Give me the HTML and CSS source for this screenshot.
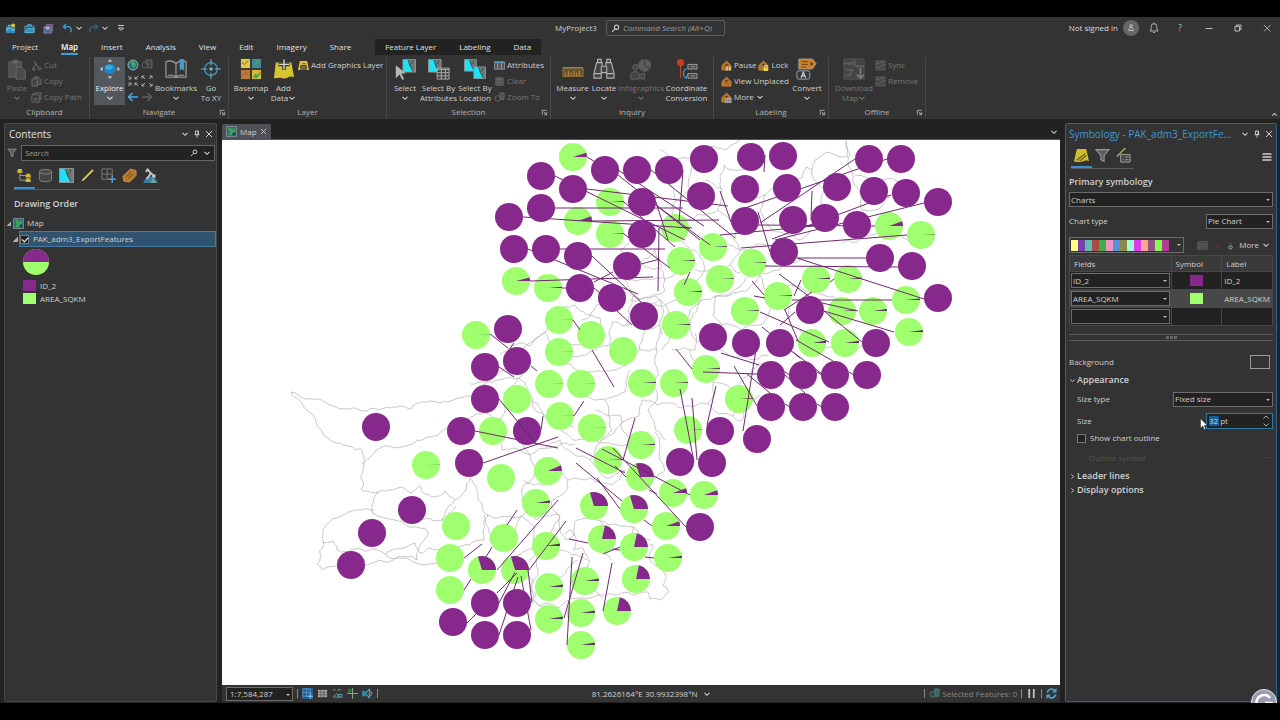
FILE: index.html
```html
<!DOCTYPE html>
<html lang="en">
<head>
<meta charset="utf-8">
<title>MyProject3</title>
<link rel="stylesheet" href="styles.css">
</head>
<body>
<svg class="sprite" aria-hidden="true">
  <symbol id="chev" viewBox="0 0 8 8"><path d="M1.5 2.8 4 5.3 6.5 2.8" fill="none" stroke="currentColor" stroke-width="1.1"/></symbol>
  <symbol id="close" viewBox="0 0 8 8"><path d="M1 1 7 7M7 1 1 7" fill="none" stroke="currentColor"/></symbol>
  <symbol id="pin" viewBox="0 0 8 8"><path d="M2.5 1h3v3.5h-3zM1.5 4.7h5M4 5v2.5M5 1v3.500" fill="none" stroke="currentColor" stroke-width=".9"/></symbol>
  <symbol id="launch" viewBox="0 0 8 8"><path d="M1.500 6.500v-5h5M3.300 3.300 6 6M6.500 3.500v3h-3" fill="none" stroke="currentColor"/></symbol>
  <symbol id="lens" viewBox="0 0 10 10"><path d="M6.200 1.200a2.400 2.400 0 1 1 0 4.800 2.400 2.400 0 0 1 0-4.800M4.400 5.400 1.200 8.800" fill="none" stroke="currentColor" stroke-width="1.200"/></symbol>
  <symbol id="funnel" viewBox="0 0 14 14"><path d="M1 1.500h12L8.500 7v5.500l-3-1.500V7z" fill="#5c5c5c" stroke="#999"/></symbol>
  <symbol id="mapicon" viewBox="0 0 12 12"><path d="M.5.500h11v11H.5z" fill="#1f6f86" stroke="#9a9a9a" stroke-width=".8"/><path d="M2 2h3l2 2 3-2v4L8 7l-1 3H2l2-3z" fill="#47a04b"/><path d="M7 8l3-1v3H7z" fill="#173f63"/></symbol>
  <symbol id="seltile" viewBox="0 0 14 14"><path d="M.5.500h13v13H.5z" fill="#6f7777" stroke="#8d9494"/><path d="M1 1h5l1.500 6L11 13H1z" fill="#1fe3f5"/><path d="m6 1 1.500 5 3-2V1M7.500 6 11 13" fill="none" stroke="#2b4b50" stroke-width=".8"/></symbol>
  <symbol id="house" viewBox="0 0 12 12"><path d="M1 6 6 1.200 11 6v5H1z" fill="#b07327" stroke="#cf8d38" stroke-width=".8"/><path d="M4.500 5.200h3M6 4v3" stroke="#57380f"/></symbol>
  <symbol id="tilegrey" viewBox="0 0 12 12"><path d="M1 1h10v10H1z" fill="#484848" stroke="#5c5c5c"/><path d="M1 4h4l2-2h3M2 8h4l2-3h3" fill="none" stroke="#666"/></symbol>
</svg>

<main class="app">
  <header class="titlebar">
    <div class="quick">
      <button aria-label="New project"><svg viewBox="0 0 12 12"><path d="M1 4h10v7H1z" fill="#2b8fc0"/><path d="M3.500 4V2.500h4V4M1 8l4-3 3 3 3-1" fill="none" stroke="#9bd5ee"/><circle cx="9" cy="2.500" r="2" fill="#d7c32d"/></svg></button>
      <button aria-label="Open project"><svg viewBox="0 0 12 12"><path d="M1 3.500h10v7H1z" fill="#2e5f78" stroke="#4ea9d3"/><path d="M4 3.500V1.500h4v2M1 10.500 3.500 6h8l-1 4.500z" fill="#3b8fb8" stroke="#6bbbdc" stroke-width=".7"/></svg></button>
      <button aria-label="Save project"><svg viewBox="0 0 12 12"><path d="M3 1h8v8H9V3H3z" fill="#76638d"/><path d="M1 4h8v7H1z" fill="#456d8e" stroke="#8a7aa3"/><path d="M3 4h4v3H3z" fill="#b9b2c5"/></svg></button>
      <button class="tight" aria-label="Undo"><svg viewBox="0 0 12 12"><path d="M4.500 1 1.500 4l3 3M1.700 4H7a3.500 3.500 0 0 1 2 6" fill="none" stroke="#3fa0d8" stroke-width="1.400"/></svg></button>
      <svg class="c"><use href="#chev"/></svg>
      <button class="tight" aria-label="Redo"><svg viewBox="0 0 12 12"><path d="m7.500 1 3 3-3 3M10.300 4H5a3.500 3.500 0 0 0-2 6" fill="none" stroke="#3a6478" stroke-width="1.400"/></svg></button>
      <svg class="c"><use href="#chev"/></svg>
      <svg class="c last" viewBox="0 0 8 8"><path d="M1 1.500h6M1.500 4 4 6.500 6.500 4z" fill="none" stroke="currentColor"/></svg>
    </div>
    <div class="project">
      <span>MyProject3</span>
      <label class="command"><svg><use href="#lens"/></svg><input aria-label="Command search" placeholder="Command Search (Alt+Q)"></label>
    </div>
    <div class="account">
      <span>Not signed in</span>
      <svg class="avatar" viewBox="0 0 16 16"><circle cx="8" cy="8" r="8" fill="#666"/><circle cx="8" cy="6" r="1.300" fill="none" stroke="#ccc" stroke-width=".9"/><path d="M5.800 10.500c0-4 4.400-4 4.400 0z" fill="none" stroke="#ccc" stroke-width=".9"/></svg>
      <button aria-label="Notifications"><svg viewBox="0 0 12 12"><path d="M2 9h8L8.800 7V4.500a2.800 2.800 0 0 0-5.600 0V7zM5 10.500h2M6 .5v1" fill="none" stroke="currentColor" stroke-width=".9"/></svg></button>
      <button>?</button>
      <button aria-label="Minimize"><svg viewBox="0 0 12 12"><path d="M2.500 6.500h7" stroke="currentColor"/></svg></button>
      <button aria-label="Restore"><svg viewBox="0 0 12 12"><path d="M3 4.500h4.500V9H3zM4.500 4.500V3H9v4.500H7.500" fill="none" stroke="currentColor"/></svg></button>
      <button aria-label="Close"><svg viewBox="0 0 12 12"><path d="m3 3 6.500 6.500M9.500 3 3 9.500" stroke="currentColor" stroke-width=".9"/></svg></button>
    </div>
  </header>

  <nav class="tabs">
    <button>Project</button><button class="on">Map</button><button>Insert</button><button>Analysis</button><button>View</button><button>Edit</button><button>Imagery</button><button>Share</button>
    <div class="context"><button>Feature Layer</button><button>Labeling</button><button>Data</button></div>
  </nav>

  <section class="ribbon">
    <div class="group clipboard">
      <div class="tools">
        <button class="big off"><svg viewBox="0 0 24 24"><path d="M3 4h14v17H3z" fill="#505050" stroke="#606060"/><path d="M7 2h6v4H7z" fill="#666"/><path d="M11 10h6l4 4v9H11z" fill="#4a4a4a" stroke="#6c6c6c"/></svg>Paste<svg class="c"><use href="#chev"/></svg></button>
        <div class="stack">
          <button class="small off"><svg viewBox="0 0 12 12"><path d="m3 1 5 7M6 4 2 9" stroke="#777"/><circle cx="9" cy="9.500" r="1.500" fill="none" stroke="#777"/><circle cx="3" cy="10" r="1.300" fill="none" stroke="#777"/></svg>Cut</button>
          <button class="small off"><svg viewBox="0 0 12 12"><path d="M1 3h6v8H1zM4 3V1h4l3 3v5H7" fill="#444" stroke="#707070"/></svg>Copy</button>
          <button class="small off"><svg viewBox="0 0 12 12"><path d="M3 3V1h8v7H9M1 3h8v8H1zM3 7l1 2 1-3 1 3 1-3" fill="none" stroke="#707070"/></svg>Copy Path</button>
        </div>
      </div><footer>Clipboard</footer>
    </div>
    <div class="group navigate">
      <div class="tools">
        <button class="big on"><svg viewBox="0 0 24 24"><ellipse cx="12" cy="12" rx="6.500" ry="5.500" fill="#1c86c7"/><ellipse cx="11" cy="10" rx="4" ry="2.500" fill="#45a9e0"/><path d="m12 1 2.500 3h-5zM12 23l2.500-3h-5zM1 12l3-2.500v5zM23 12l-3-2.500v5z" fill="#c6c6c6"/></svg>Explore<svg class="c"><use href="#chev"/></svg></button>
        <div class="pad">
          <button aria-label="Full extent"><svg viewBox="0 0 12 12"><circle cx="6" cy="6" r="5" fill="#246f82" stroke="#9bb6bd" stroke-width=".9"/><path d="m3 3 4-1 2 4-3 4-1-4z" fill="#4aa35a"/></svg></button>
          <button aria-label="Zoom to selection"><svg viewBox="0 0 12 12"><path d="M5 1h6v8H7z" fill="#444" stroke="#626262"/><circle cx="4" cy="6" r="3" fill="none" stroke="#626262"/></svg></button>
          <button aria-label="Fixed zoom in"><svg viewBox="0 0 12 12"><path d="m1 1 3 3M4 1.500V4H1.500M11 1 8 4M8 1.500V4h2.500M1 11l3-3M1.500 8H4v2.500M11 11 8 8M8 10.500V8h2.500" fill="none" stroke="#b5b5b5" stroke-width=".9"/></svg></button>
          <button aria-label="Fixed zoom out"><svg viewBox="0 0 12 12"><path d="m1 1 3 3M1 3.500V1h2.500M11 1 8 4M8.500 1H11v2.500M1 11l3-3M1 8.500V11h2.500M11 11 8 8M8.500 11H11V8.500" fill="none" stroke="#b5b5b5" stroke-width=".9"/></svg></button>
          <button aria-label="Previous extent"><svg viewBox="0 0 12 12"><path d="M5.500 2 1.500 6l4 4M1.500 6H11" fill="none" stroke="#49ade2" stroke-width="1.500"/></svg></button>
          <button aria-label="Next extent"><svg viewBox="0 0 12 12"><path d="m6.500 2 4 4-4 4M10.500 6H1" fill="none" stroke="#606060" stroke-width="1.500"/></svg></button>
        </div>
        <button class="big"><svg viewBox="0 0 24 24"><path d="M1 4c5-2 8-1 11 2 3-3 6-4 11-2v17H1zM12 6v15M3 19c4-1 7-1 9 2 2-3 5-3 9-2" fill="none" stroke="#a5a5a5" stroke-width="1.200"/><path d="M16 1h5v13l-2.500-2-2.500 2z" fill="#3f9bd2"/></svg>Bookmarks<svg class="c"><use href="#chev"/></svg></button>
        <button class="big"><svg viewBox="0 0 24 24"><circle cx="12" cy="12" r="7" fill="none" stroke="#4096c2" stroke-width="1.500"/><circle cx="12" cy="12" r="2" fill="#69b7d9"/><path d="M12 1v7M12 16v7M1 12h7M16 12h7" stroke="#7ea9bc" stroke-width="1.200"/></svg>Go<br>To XY</button>
      </div><footer>Navigate<svg><use href="#launch"/></svg></footer>
    </div>
    <div class="group layer">
      <div class="tools">
        <button class="big"><svg viewBox="0 0 24 24"><path d="M1 1h10v10H1z" fill="#e4c64c"/><path d="M13 1h10v10H13z" fill="#3d88a8"/><path d="M1 13h10v10H1z" fill="#be793a"/><path d="M13 13h10v10H13z" fill="#d6b93b"/><path d="m14 9 5-7h3l-3 5zM14 21l3-4 2 2 3-5v4l-4 4z" fill="#4ba153"/><path d="m2 5 3 2 4-4M2 20l4-4 3 3" fill="none" stroke="#7c6336"/></svg>Basemap<svg class="c"><use href="#chev"/></svg></button>
        <button class="big"><svg viewBox="0 0 24 24"><path d="M3 5h17l3 16c-5-3-8 3-13 1-3-1-6 0-9 0z" fill="#d6c430"/><path d="M12 1v12M6 7h12" stroke="#353535" stroke-width="4"/><path d="M12 1.500v11M6.500 7h11" stroke="#d8d8d8" stroke-width="1.500"/></svg>Add<span>Data<svg class="c"><use href="#chev"/></svg></span></button>
        <div class="stack"><button class="small"><svg viewBox="0 0 12 12"><path d="M2 1h8l2 10H0z" fill="#d9c42f"/><path d="M3 6h6v4H3zM5 4h3" fill="#7b7138" stroke="#413d20"/></svg>Add Graphics Layer</button></div>
      </div><footer>Layer</footer>
    </div>
    <div class="group selection">
      <div class="tools">
        <button class="big"><svg viewBox="0 0 24 24"><use href="#seltile" x="9" y="1" width="15" height="15"/><path d="M2 8v14l4-4 3 6 2-1-3-6h5z" fill="#b7b7b7"/></svg>Select<svg class="c"><use href="#chev"/></svg></button>
        <button class="big"><svg viewBox="0 0 24 24"><use href="#seltile" x="0" y="1" width="15" height="15"/><path d="M10 11h13v12H10z" fill="#404040" stroke="#b0b0b0"/><path d="M10 12.500h13M10 16h13M10 19.500h13M14.500 12v11M19 12v11" stroke="#b0b0b0"/></svg>Select By<br>Attributes</button>
        <button class="big"><svg viewBox="0 0 24 24"><use href="#seltile" x="0" y="1" width="14" height="14"/><use href="#seltile" x="10" y="9" width="14" height="14"/></svg>Select By<br>Location</button>
        <div class="stack">
          <button class="small"><svg viewBox="0 0 12 12"><path d="M.5 2h11v8H.5z" fill="#555" stroke="#aaa" stroke-width=".8"/><path d="M.5 2.500h11" stroke="#4a94bd" stroke-width="1.500"/><path d="M4 3v7M8 3v7" stroke="#aaa"/></svg>Attributes</button>
          <button class="small off"><svg viewBox="0 0 12 12"><path d="M2 2h8v8H2zM3 4h6M3 7h6" fill="#555" stroke="#686868"/></svg>Clear</button>
          <button class="small off"><svg viewBox="0 0 12 12"><path d="M6 1h5v7H7z" fill="#505050" stroke="#666"/><circle cx="4" cy="7" r="3" fill="none" stroke="#666"/></svg>Zoom To</button>
        </div>
      </div><footer>Selection<svg><use href="#launch"/></svg></footer>
    </div>
    <div class="group inquiry">
      <div class="tools">
        <button class="big"><svg viewBox="0 0 24 24"><path d="M1 11h22v9H1z" fill="#6b532c" stroke="#a0763c"/><path d="M1 10.500h22" stroke="#5ca1bd"/><path d="M4 16v4M7 14v6M10 16v4M13 14v6M16 16v4M19 14v6" stroke="#c28e47"/></svg>Measure<svg class="c"><use href="#chev"/></svg></button>
        <button class="big"><svg viewBox="0 0 24 24"><path d="M4 5h6v4h4V5h6l3 12v5h-8v-6H9v6H1v-5zM5 1.500h4V5H5zM15 1.500h4V5h-4zM1 17h8M15 17h8M9 9v7M15 9v7" fill="#444" stroke="#b2b2b2" stroke-width="1.200"/></svg>Locate<svg class="c"><use href="#chev"/></svg></button>
        <button class="big off"><svg viewBox="0 0 24 24"><circle cx="16" cy="8" r="7" fill="#5c5c5c"/><path d="M16 8V1M16 8l6 4" stroke="#383838"/><circle cx="6" cy="10" r="3" fill="#444" stroke="#666"/><path d="M1 23v-6q5-5 9 0v6zM12 17h4v6h-4z" fill="#444" stroke="#666"/></svg>Infographics<svg class="c"><use href="#chev"/></svg></button>
        <button class="big"><svg viewBox="0 0 24 24"><circle cx="5" cy="5" r="4" fill="#c63a27"/><path d="M5 8v14" stroke="#d04c38"/><path d="M13 7h10v5H13zM13 17h10v5H13zM16 9.500h5M16 19.500h5" fill="#444" stroke="#a6a6a6"/><path d="M12 12c-5 0-5 9-1 9M8 19l3 3 2-4" fill="none" stroke="#4299c6" stroke-width="1.300"/></svg>Coordinate<br>Conversion</button>
      </div><footer>Inquiry</footer>
    </div>
    <div class="group labeling">
      <div class="tools">
        <div class="stack">
          <div class="pair"><button class="small"><svg viewBox="0 0 12 12"><use href="#house"/><path d="M6.500 7v4.500M9.500 7v4.500" stroke="#ddd" stroke-width="1.500"/></svg>Pause</button><button class="small"><svg viewBox="0 0 12 12"><use href="#house"/><path d="M6 8h5v4H6z" fill="#ebcf3c"/><path d="M7 8V6h3v2" fill="none" stroke="#ddd"/></svg>Lock</button></div>
          <button class="small"><svg viewBox="0 0 12 12"><use href="#house"/><path d="m5 7 5 5M10 7l-5 5" stroke="#cf542f"/></svg>View Unplaced</button>
          <button class="small"><svg viewBox="0 0 12 12"><use href="#house"/><path d="M5 7h6v5H5zM7 7v5M9 7v5" fill="#777" stroke="#ccc" stroke-width=".6"/></svg>More<svg class="c"><use href="#chev"/></svg></button>
        </div>
        <button class="big"><svg viewBox="0 0 24 24"><path d="M3 1h15l4 5-4 6H3z" fill="#c9812a" stroke="#a3a3a3" stroke-width=".8"/><path d="M6 4h7M6 7h7M6 10h5" stroke="#6c4313"/><circle cx="17" cy="6.500" r="1.500" fill="#5b3b17"/><rect x="1" y="14" width="14" height="9" rx="2" fill="#303a3d" stroke="#9db2b9"/><path d="m5.500 21.500 2.500-6 2.500 6M6.300 19.500h3.400" fill="none" stroke="#d5d5d5" stroke-width="1.200"/></svg>Convert<svg class="c"><use href="#chev"/></svg></button>
      </div><footer>Labeling<svg><use href="#launch"/></svg></footer>
    </div>
    <div class="group offline">
      <div class="tools">
        <button class="big off"><svg viewBox="0 0 24 24"><path d="M1 1h22v22H1z" fill="#444" stroke="#585858"/><path d="M1 6h10l4 3h8M3 13h7l-3 6H3M13 3v3" fill="none" stroke="#5c5c5c" stroke-width="2"/><path d="M19 11v11M15 18l4 4 4-4" fill="none" stroke="#808080" stroke-width="1.600"/></svg>Download<span>Map<svg class="c"><use href="#chev"/></svg></span></button>
        <div class="stack">
          <button class="small off"><svg><use href="#tilegrey"/></svg>Sync</button>
          <button class="small off"><svg><use href="#tilegrey"/></svg>Remove</button>
        </div>
      </div><footer>Offline<svg><use href="#launch"/></svg></footer>
    </div>
    <button class="collapse" aria-label="Collapse ribbon"><svg viewBox="0 0 8 8"><path d="M1.500 5.300 4 2.800l2.500 2.500" fill="none" stroke="currentColor" stroke-width="1.200"/></svg></button>
  </section>

  <section class="work">
    <aside class="panel contents">
      <header><h2>Contents</h2><span class="ctl"><svg><use href="#chev"/></svg><svg><use href="#pin"/></svg><svg><use href="#close"/></svg></span></header>
      <div class="find"><svg><use href="#funnel"/></svg><label class="search"><input aria-label="Search layers" placeholder="Search"><svg><use href="#lens"/></svg><svg><use href="#chev"/></svg></label></div>
      <div class="icons">
        <button class="on" aria-label="Drawing order"><svg viewBox="0 0 16 16"><path d="M3 4v9h7M3 8h7" fill="none" stroke="#999"/><path d="M1 1h4l1 4H0zM10 6h4l1 4H9zM10 11h4l1 4H9z" fill="#cfbc33"/></svg></button>
        <button aria-label="Data source"><svg viewBox="0 0 16 16"><path d="M1.500 4v8c0 3.500 13 3.500 13 0V4" fill="#444" stroke="#868686"/><ellipse cx="8" cy="4" rx="6.500" ry="2.500" fill="#4a4a4a" stroke="#868686"/></svg></button>
        <button aria-label="Selection"><svg><use href="#seltile"/></svg></button>
        <button aria-label="Editing"><svg viewBox="0 0 16 16"><path d="M3 13 14 2" stroke="#e0cf4a" stroke-width="2"/><path d="m2 14 2-2" stroke="#ddd"/></svg></button>
        <button aria-label="Snapping"><svg viewBox="0 0 16 16"><path d="M1 1h11v11H1zM6.500 1v11M1 6.500h11" fill="none" stroke="#7c7c7c"/><path d="M12 8v8M8 12h8" stroke="#4aa2dc" stroke-width="1.500"/></svg></button>
        <button aria-label="Labeling"><svg viewBox="0 0 16 16"><path d="m1 9 8-8 6 2v5l-7 7-6-1z" fill="#b47731" stroke="#d19449"/><path d="m5 9 5-5M7 11l5-5" stroke="#6f471a"/></svg></button>
        <button aria-label="Perspective imagery"><svg viewBox="0 0 16 16"><path d="m0 16 4-7h8l4 7z" fill="#2c7fae"/><path d="m8 16 2-5 5 5z" fill="#7e9f86"/><path d="m4 1 9 9M3 4l3-3M10 10l3-3M8 6l-4 6" stroke="#c5c5c5" stroke-width="2"/></svg></button>
      </div>
      <h3>Drawing Order</h3>
      <div class="tree">
        <div class="node"><i class="tri"></i><svg><use href="#mapicon"/></svg>Map</div>
        <div class="node sub"><i class="tri"></i><label><input type="checkbox" checked>PAK_adm3_ExportFeatures</label></div>
        <svg class="pie" viewBox="0 0 26 26"><circle cx="13" cy="13" r="13" fill="#a0ff6e"/><path d="M0 13a13 13 0 0 1 26 0z" fill="#87288c"/></svg>
        <div class="key"><i class="sw violet"></i>ID_2</div>
        <div class="key"><i class="sw lime"></i>AREA_SQKM</div>
      </div>
    </aside>

    <section class="view">
      <div class="viewtabs"><div class="viewtab"><svg><use href="#mapicon"/></svg>Map<button aria-label="Close map"><svg><use href="#close"/></svg></button></div><svg class="c"><use href="#chev"/></svg></div>
      <div class="canvas"><svg id="map" viewBox="222 140 838 545" preserveAspectRatio="xMidYMin slice" role="img" aria-label="Pie chart map of districts"></svg></div>
      <div class="status">
        <label class="sel scale"><select aria-label="Scale"><option>1:7,584,287</option></select></label><i class="bar"></i>
        <button class="on" aria-label="Constraints"><svg viewBox="0 0 12 12"><path d="M1 1h8v8H1zM5 1v8M1 5h8" fill="none" stroke="#5f93bb"/><path d="M9 6v6M6 9h6" stroke="#9cd3f5"/></svg></button>
        <button aria-label="Grid"><svg viewBox="0 0 12 12"><path d="M1 2h10v8H1z" fill="#a9a9a9"/><path d="M1 4.700h10M1 7.400h10M4.300 2v8M7.700 2v8" stroke="#444" stroke-width=".7"/></svg></button>
        <button aria-label="Dynamic grid"><svg viewBox="0 0 12 12"><path d="M1 2h3M6 2h4M2 10h6l-3-4" fill="none" stroke="#72a68a"/><path d="M5 6 1 10M7 7h4v3H8z" fill="none" stroke="#58aad0"/></svg></button>
        <button aria-label="Guides"><svg viewBox="0 0 12 12"><path d="M6 0v12M0 6h12" stroke="#8fb096"/><path d="M1 1h4v4H1z" fill="#2c7042"/></svg></button>
        <button aria-label="Inference"><svg viewBox="0 0 12 12"><path d="M0 3h4v6H0z" fill="#2785b8"/><path d="M4 6l4-5v10zM9 3l2 3-2 3" fill="none" stroke="#75bfe2"/></svg></button>
        <i class="bar"></i>
        <div class="coord">81.2626164°E 30.9932398°N<svg class="c"><use href="#chev"/></svg></div>
        <i class="bar"></i><span class="picked"><svg viewBox="0 0 12 12"><path d="M6 1h5v8H7z" fill="#336969" stroke="#507979"/><circle cx="4" cy="7" r="3" fill="#2c4545" stroke="#507979"/></svg>Selected Features: 0</span><i class="bar"></i>
        <button aria-label="Pause drawing"><svg viewBox="0 0 12 12"><path d="M3.500 1v10M8.500 1v10" stroke="#c0c0c0" stroke-width="2"/></svg></button><i class="bar"></i>
        <button aria-label="Refresh"><svg viewBox="0 0 12 12"><path d="M1.500 5a4.500 4.500 0 0 1 8-2M10.500 7a4.500 4.500 0 0 1-8 2" fill="none" stroke="#49a4cf" stroke-width="1.800"/><path d="M11.500 0v5h-5zM.5 12V7h5z" fill="#49a4cf"/></svg></button>
      </div>
    </section>

    <aside class="panel symbology">
      <header><h2>Symbology - PAK_adm3_ExportFe...</h2><span class="ctl"><svg><use href="#chev"/></svg><svg><use href="#pin"/></svg><svg><use href="#close"/></svg></span></header>
      <div class="symtop">
        <div class="icons">
          <button class="on" aria-label="Primary symbology"><svg viewBox="0 0 16 16"><path d="M3 1h10l3 13c-5-2-7 2-11 1-2 0-3 0-5-1z" fill="#d0bd30"/><path d="m3 13 9-7M6 14l7-6" stroke="#5b5424" stroke-width="1.200"/></svg></button>
          <button aria-label="Vary symbology"><svg><use href="#funnel"/></svg></button>
          <button aria-label="Symbol layer drawing"><svg viewBox="0 0 16 16"><path d="M1 9 10 0" stroke="#b4ad72" stroke-width="1.500"/><path d="M5 7h10v8H5zM7 9.500h1M9.500 9.500h4M7 12.500h1M9.500 12.500h4" fill="#3e3e3e" stroke="#aaa"/></svg></button>
        </div>
        <button class="menu" aria-label="Menu"><svg viewBox="0 0 10 10"><path d="M.5 2h9M.5 5h9M.5 8h9" stroke="#d0d0d0" stroke-width="1.500"/></svg></button>
      </div>
      <h3>Primary symbology</h3>
      <label class="sel full"><select aria-label="Primary symbology"><option>Charts</option></select></label>
      <div class="row"><label for="ct">Chart type</label><span class="sel w67"><select id="ct"><option>Pie Chart</option></select></span></div>
      <div class="row scheme">
        <button class="ramp" aria-label="Color scheme"><i></i><i></i><i></i><i></i><i></i><i></i><i></i><i></i><i></i><i></i><i></i><i></i><i></i><i></i></button>
        <span class="acts"><svg viewBox="0 0 12 12"><path d="M1 2h10v8H1zM1 5h10M1 7.500h10" fill="#444" stroke="#636363"/></svg><svg viewBox="0 0 12 12"><path d="m4 4 5 5M9 4 4 9" stroke="#742f2b"/></svg><svg viewBox="0 0 12 12"><circle cx="6" cy="8" r="1.800" fill="none" stroke="#b5b5b5"/><path d="M4 4h4" stroke="#456174"/></svg></span>
        <button class="more">More<svg class="c"><use href="#chev"/></svg></button>
      </div>
      <table>
        <thead><tr><th>Fields</th><th>Symbol</th><th>Label</th></tr></thead>
        <tbody>
          <tr><td><span class="sel"><select aria-label="Field 1"><option>ID_2</option></select></span></td><td><i class="sw violet"></i></td><td>ID_2</td></tr>
          <tr class="hot"><td><span class="sel"><select aria-label="Field 2"><option>AREA_SQKM</option></select></span></td><td><i class="sw lime"></i></td><td>AREA_SQKM</td></tr>
          <tr><td><span class="sel"><select aria-label="Field 3"><option></option></select></span></td><td></td><td></td></tr>
        </tbody>
      </table>
      <div class="split"><i></i><i></i><i></i></div>
      <div class="row bg"><span>Background</span><button class="box" aria-label="Background symbol"></button></div>
      <button class="fold open"><svg><use href="#chev"/></svg>Appearance</button>
      <div class="row in"><label for="st">Size type</label><span class="sel w100"><select id="st"><option>Fixed size</option></select></span></div>
      <div class="row in size"><label for="sz">Size</label><span class="spin"><mark></mark><input id="sz" value="32 pt"><svg viewBox="0 0 8 14"><path d="M1.500 4.500 4 2l2.500 2.500M1.500 9.500 4 12l2.500-2.500" fill="none" stroke="#bbb" stroke-width=".9"/></svg></span>
        <svg class="cursor" viewBox="0 0 8 12"><path d="M.5.500v9.500l2.200-2 1.500 3.500 1.500-.7-1.500-3.300h3z" fill="#fff" stroke="#222" stroke-width=".5"/></svg></div>
      <label class="outline"><input type="checkbox">Show chart outline</label>
      <div class="row ghost"><span>Outline symbol</span><i></i></div>
      <button class="fold"><svg><use href="#chev"/></svg>Leader lines</button>
      <button class="fold"><svg><use href="#chev"/></svg>Display options</button>
    </aside>
    <svg class="badge" viewBox="0 0 26 14" aria-hidden="true"><circle cx="13" cy="13" r="12.500" fill="#9c9caf" stroke="#e8e8ee"/><path d="M19 9a7.500 7.500 0 1 0 1.500 5H14" fill="none" stroke="#fff" stroke-width="2.500"/></svg>
  </section>
</main>
<script src="map.js"></script>
</body>
</html>
```
FILE: styles.css
```css
* { box-sizing: border-box; }
body { margin: 0; background: #000; color: #d0d0d0; font: 8px/10px "Open Sans", "Noto Sans", sans-serif; }
button, input, select { font: inherit; color: inherit; background: none; border: 0; padding: 0; margin: 0; outline: 0; }
button { display: flex; align-items: center; white-space: nowrap; }
svg { display: block; flex: none; }
h2, h3 { margin: 0; font-weight: 400; }
h3 { font-size: 9px; line-height: 12px; font-weight: 600; }
.sprite { position: absolute; width: 0; height: 0; }
.c { width: 8px; height: 8px; }

.app { height: calc(100vh - 17px); margin-top: 17px; padding-bottom: 17px; display: flex; flex-direction: column; }

.titlebar { display: grid; grid-template-columns: 1fr auto 1fr; align-items: center; height: 22px; flex: none; background: #333; }
.quick { display: flex; align-items: center; padding-left: 1px; }
.quick button { padding: 0 4px; }
.quick .tight { padding: 0 0 0 4px; }
.quick button svg { width: 11px; height: 11px; }
.quick .c { margin: 0 1px 0 2px; }
.quick .last { margin-left: 7px; }
.project { display: flex; align-items: center; gap: 9px; }
.command { display: flex; align-items: center; gap: 3px; width: 119px; height: 16px; padding: 0 4px; border: 1px solid #5c5c5c; border-radius: 2px; }
.command svg { width: 9px; height: 9px; }
.command input { width: 100px; font-style: italic; }
input::placeholder { color: #9c9c9c; opacity: 1; }
.account { display: flex; align-items: center; justify-content: flex-end; padding-right: 7px; color: #bbb; }
.account span { color: #ddd; margin-right: 5px; }
.account .avatar { width: 16px; height: 16px; margin-right: 9px; }
.account button { width: 12px; height: 12px; justify-content: center; margin-right: 14px; font-size: 9px; }
.account button:nth-of-type(n+2) { margin-right: 17px; }
.account button:last-child { margin-right: 0; }
.account button svg { width: 12px; height: 12px; }

.tabs { display: flex; align-items: stretch; height: 16px; flex: none; padding-left: 12px; gap: 23px; background: #333; color: #e0e0e0; }
.tabs button { border-bottom: 2px solid transparent; height: 16px; padding-top: 2px; }
.tabs .on { color: #fff; font-weight: 600; border-color: #36a0d8; }
.context { display: flex; gap: 23px; margin-left: 1px; padding: 0 10px; background: #222; }

.ribbon { display: grid; grid-template-columns: 90px 139px 158px 164px 163px 115px 97px 1fr; height: 64px; flex: none; padding-top: 2px; background: #333; }
.group { display: flex; flex-direction: column; justify-content: space-between; border-right: 1px solid #484848; }
.group footer { position: relative; height: 13px; text-align: center; color: #b4b4b4; line-height: 12px; }
.group footer svg { position: absolute; right: 2px; top: 3px; width: 7px; height: 7px; }
.tools { display: grid; justify-content: start; padding-left: 4px; }
.clipboard .tools { grid-template-columns: 28px auto; padding-left: 3px; }
.navigate .tools { grid-template-columns: 31px 29px 44px 26px; }
.layer .tools { grid-template-columns: 36px 29px auto; }
.selection .tools { grid-template-columns: 32px 35px 38px auto; padding-left: 2px; }
.inquiry .tools { grid-template-columns: 35px 28px 46px 45px; }
.labeling .tools { grid-template-columns: 70px 38px; }
.offline .tools { grid-template-columns: 42px auto; }
.big { display: flex; flex-direction: column; align-items: center; justify-content: flex-start; height: 48px; padding-top: 1px; line-height: 10px; text-align: center; }
.big > svg:first-child { width: 22px; height: 22px; margin-bottom: 3px; }
.big > .c { margin-top: 1px; }
.big > span { display: flex; align-items: center; }
.big.on { background: #54585d; color: #eee; }
.off { color: #777; }
.stack { display: flex; flex-direction: column; }
.small { height: 16px; gap: 2px; }
.small > svg:first-child { width: 11px; height: 11px; }
.pair { display: flex; gap: 2px; }
.labeling .stack { padding-left: 3px; }
.pad { display: grid; grid-template-columns: 14px 14px; grid-auto-rows: 16px; align-items: center; padding-left: 2px; }
.pad svg { width: 12px; height: 12px; }
.collapse { align-self: end; justify-self: end; padding: 0 2px 1px 0; }
.collapse svg { width: 7px; height: 7px; }

.work { position: relative; flex: 1; min-height: 0; display: grid; grid-template-columns: 213px minmax(0, 1fr) 212px; column-gap: 5px; padding: 4px 3px 1px 4px; background: #222; }
.panel { background: #333; border: 1px solid #484848; border-radius: 2px; min-height: 0; }
.panel > header { display: flex; align-items: center; justify-content: space-between; height: 20px; padding: 0 3px 0 4px; }
.panel h2 { font-size: 10px; line-height: 14px; color: #e0e0e0; white-space: nowrap; }
.ctl { display: flex; gap: 4px; }
.ctl svg { width: 8px; height: 8px; }
.find { display: flex; align-items: center; gap: 4px; padding: 1px 1px 0 2px; }
.find > svg { width: 10px; height: 12px; }
.search { flex: 1; display: flex; align-items: center; gap: 5px; height: 16px; padding: 0 3px; background: #222; border: 1px solid #666; }
.search input { flex: 1; min-width: 0; font-style: italic; }
.search svg { width: 8px; height: 8px; }
.icons { display: flex; width: max-content; border-bottom: 1px solid #5a5a5a; }
.icons button { width: 21px; height: 26px; justify-content: center; border-bottom: 2px solid transparent; }
.icons button.on { border-color: #3c8ed0; }
.icons svg { width: 15px; height: 15px; }
.contents .icons { margin: 2px 0 0 9px; }
.contents h3 { padding: 8px 0 5px 9px; }
.node { display: flex; align-items: center; gap: 2px; height: 16px; padding-left: 1px; }
.node svg { width: 11px; height: 11px; margin-right: 1px; }
.tri { width: 5px; height: 5px; background: linear-gradient(135deg, transparent 50%, #aaa 50%); }
.sub { padding-left: 8px; gap: 1px; }
.sub label { flex: 1; display: flex; align-items: center; gap: 4px; height: 16px; background: #30536f; border: 1px solid #487aa0; }
input[type=checkbox] { appearance: none; flex: none; width: 9px; height: 9px; border: 1px solid #777; background: #222; }
.sub input { position: relative; }
.sub input::after { content: ""; position: absolute; left: 1px; top: 1px; width: 5px; height: 3px; border: solid #fff; border-width: 0 0 1px 1px; transform: rotate(-45deg); }
.pie { width: 26px; height: 26px; margin: 2px 0 4px 18px; }
.key { display: flex; align-items: center; gap: 4px; height: 13px; padding-left: 18px; }
.sw { display: block; width: 13px; height: 11px; }
.violet { background: #87288c; }
.lime { background: #a0ff6e; }

.view { display: flex; flex-direction: column; min-width: 0; min-height: 0; margin-top: 1px; }
.viewtabs { display: flex; align-items: center; justify-content: space-between; flex: none; height: 16px; padding-right: 2px; border-bottom: 1px solid #555; }
.viewtab { display: flex; align-items: center; gap: 3px; height: 15px; padding: 0 4px; background: #4d5156; border-radius: 2px 2px 0 0; }
.viewtab > svg { width: 11px; height: 11px; }
.viewtab button svg { width: 7px; height: 7px; }
.canvas { flex: 1; min-height: 0; background: #fff; }
.canvas svg { width: 100%; height: 100%; }
.status { display: flex; align-items: center; gap: 4px; height: 17px; flex: none; padding: 0 3px 0 4px; background: #333; }
.status button svg, .picked svg { width: 11px; height: 11px; }
.status .on { background: #1e5f96; }
.bar { width: 1px; height: 9px; background: #888; }
.coord { flex: 1; display: flex; justify-content: center; align-items: center; gap: 5px; }
.picked { display: flex; align-items: center; gap: 2px; color: #888; }

.sel { position: relative; display: block; height: 15px; background: #222; border: 1px solid #6c6c6c; }
.sel select { appearance: none; width: 100%; height: 100%; padding: 0 0 0 1px; display: block; }
.sel option { background: #222; }
.sel::after, .ramp::after { content: ""; position: absolute; right: 2px; top: 6px; border: 2px solid transparent; border-top-color: #bbb; pointer-events: none; }
.scale { width: 67px; height: 14px; }
.scale select { padding-left: 3px; }

.symbology { border-color: #2e6485; padding: 0 3px; }
.symbology > header { padding: 0; }
.symbology h2 { color: #3c99d4; }
.symtop { display: flex; align-items: center; justify-content: space-between; }
.symtop .icons { margin-left: 2px; }
.symtop .icons button { height: 24px; }
.menu { padding-right: 1px; }
.menu svg { width: 10px; height: 10px; }
.symbology h3 { margin: 7px 0 4px; }
.row { display: flex; align-items: center; justify-content: space-between; height: 16px; }
.w67 { width: 67px; }
.w100 { width: 100px; }
.full + .row { margin-top: 6px; }
.scheme { margin: 8px 0 2px; }
.ramp { position: relative; width: 115px; height: 16px; border: 1px solid #6c6c6c; padding: 0 1px; }
.ramp i { width: 7px; height: 11px; background: #ffff80; }
.ramp i:nth-child(2) { background: #7b3fae; }
.ramp i:nth-child(3) { background: #5cc0b2; }
.ramp i:nth-child(4) { background: #a94c4c; }
.ramp i:nth-child(5) { background: #3fae46; }
.ramp i:nth-child(6) { background: #f294c2; }
.ramp i:nth-child(7) { background: #5b8fd9; }
.ramp i:nth-child(8) { background: #8b8a4a; }
.ramp i:nth-child(9) { background: #9dffcf; }
.ramp i:nth-child(10) { background: #dd3bea; }
.ramp i:nth-child(11) { background: #f5a894; }
.ramp i:nth-child(12) { background: #94527f; }
.ramp i:nth-child(13) { background: #87fb55; }
.ramp i:nth-child(14) { background: #b23b93; }
.acts { display: flex; gap: 3px; margin-left: 9px; }
.acts svg { width: 11px; height: 11px; }
.more { gap: 3px; padding-right: 3px; }
table { width: 100%; border-collapse: collapse; table-layout: fixed; background: #222; }
th, td { border: 1px solid #484848; padding: 0 2px; height: 18px; text-align: left; font-weight: 400; white-space: nowrap; }
th { height: 16px; background: #3a3a3a; padding-left: 4px; }
th:first-child { width: 50%; }
th:nth-child(2) { width: 25%; }
td:first-child { padding: 0 1px; }
.hot { background: #484848; }
td .sw { margin: 0 auto; }
.split { display: flex; justify-content: center; align-items: center; gap: 1px; height: 7px; margin-top: 8px; border: solid #5a5a5a; border-width: 1px 0; }
.split i { width: 3px; height: 3px; background: #666; }
.bg { margin: 13px 0 3px; }
.box { width: 20px; height: 14px; border: 1px solid #999; margin-right: 3px; }
.fold { height: 14px; gap: 1px; font-size: 9px; font-weight: 600; }
.fold svg { width: 7px; height: 7px; transform: rotate(-90deg); }
.fold.open svg { transform: none; }
.open { margin-bottom: 4px; }
.in { padding-left: 8px; margin-bottom: 6px; }
.size { position: relative; margin-bottom: 1px; }
.spin { position: relative; display: flex; align-items: center; width: 67px; height: 16px; padding: 0 2px; background: #222; border: 1px solid #2f78a8; }
.spin mark { position: absolute; left: 2px; top: 2px; width: 10px; height: 10px; background: #175f94; }
.spin input { position: relative; flex: 1; min-width: 0; }
.spin svg { width: 8px; height: 14px; }
.cursor { position: absolute; left: 131px; top: 5px; width: 8px; height: 12px; }
.outline { display: flex; align-items: center; gap: 4px; height: 16px; padding-left: 8px; }
.ghost { height: 23px; padding: 0 3px 0 20px; color: #555; }
.ghost i { width: 8px; height: 1px; background: #444; }
.badge { position: absolute; right: 3px; bottom: 0; width: 26px; height: 14px; }
```
FILE: map.js
```js
const NS = "http://www.w3.org/2000/svg";
const map = document.getElementById("map");
const R = 14;

function add(tag, attrs) {
  const el = document.createElementNS(NS, tag);
  for (const k in attrs) el.setAttribute(k, attrs[k]);
  map.appendChild(el);
}

let seed = 7;
function rnd() {
  seed = (seed * 16807) % 2147483647;
  return seed / 2147483647 - 0.5;
}

// Roughens a coarse district boundary by displacing segment midpoints.
function rough(a, b, out) {
  const dx = b[0] - a[0], dy = b[1] - a[1], len = Math.hypot(dx, dy);
  if (len < 4) { out.push(b); return; }
  const k = rnd() * (len > 30 ? 0.06 : 0.3);
  const m = [(a[0] + b[0]) / 2 - dy * k, (a[1] + b[1]) / 2 + dx * k];
  rough(a, m, out);
  rough(m, b, out);
}

const borders = [
  "291,392 347,409 400,406 411,409 413,406 423,402 447,402 471,397 500,372 520,350 545,332",
  "291,392 308,411 318,427 328,438 340,443 349,446 355,450 361,449 363,487 361,489 380,491 404,488 412,493 420,486 425,494 438,496 445,491 455,500 466,490 470,478 476,486 484,512 490,516 520,517 536,495",
  "362,464 375,451 400,448 417,440 430,437 447,429 470,418 485,412 500,420 512,390 523,375",
  "378,491 373,514 384,518 402,521 412,527 425,528 428,532 419,548 416,560",
  "374,510 362,510 341,516 326,525 320,560 317,564 323,570 336,566 352,565 386,562 398,558 428,564 450,563",
  "322,542 333,541 337,550 374,549 386,555 403,548 415,543 420,553 428,548 440,550 470,545 484,540 488,514",
  "442,520 445,512 455,500", "386,556 396,558 412,556 418,560", "418,520 442,520 456,506",
  "484,515 490,542 505,550 515,532 521,516 535,527 533,548 515,556",
  "496,420 502,450 530,455 533,478 524,485 523,505 536,520",
  "500,380 520,379 525,383 532,397 537,412 550,416 574,427",
  "531,400 550,420 573,440 600,443 622,446 638,440",
  "518,430 530,455 550,448 575,444", "524,480 545,485 563,473 568,487 552,500 560,518 542,545 530,560",
  "536,520 560,516 566,540 575,535 577,520 600,521 634,527 650,540",
  "542,545 538,570 531,590 540,606 560,607 581,598 612,594 634,595 648,592 650,599 660,600 669,592 663,585 666,575 650,560 653,545 634,545",
  "560,550 572,555 589,560 589,580 603,598", "565,534 571,530 576,538 573,550 583,548 589,558",
  "552,580 566,573 577,560", "600,521 603,545 611,560", "634,527 628,548 640,560",
  "655,432 660,460 665,470 650,480 633,482", "657,350 657,400 648,410 655,430 665,440",
  "545,332 552,310 575,305 600,318 602,330 580,345 552,346",
  "545,332 560,358 580,356 610,345 612,322 625,326 640,316 655,305",
  "552,360 590,372 620,368 640,350 657,350 660,330 690,320 700,300",
  "580,372 586,395 605,400 625,392 630,370", "605,400 612,430 600,442 620,425 640,414 642,400",
  "690,350 700,370 714,382 708,404 733,416 741,421 752,401",
  "657,405 680,408 708,404", "714,382 735,389 752,370 768,362",
  "672,350 695,350 695,333", "620,250 640,262 660,268 665,290 640,300 625,280",
  "620,250 630,240 650,245 665,225 690,220", "640,262 655,250 662,268", "628,280 660,278 680,270",
  "625,326 633,296 655,296 664,310 662,335", "655,305 690,295 705,270 700,255",
  "676,200 690,190 692,160 705,148 725,150 740,140", "705,180 722,190 724,165 740,170 755,165",
  "722,190 718,210 735,230 740,250 730,265", "690,220 705,215 718,210", "700,245 726,243 742,250 770,245",
  "730,190 742,195 765,195 785,180 802,178", "765,195 760,210 772,230 800,240 810,230",
  "802,178 806,167 812,170 815,160 830,152 848,157 846,141", "812,170 814,180 824,190 822,205 812,212",
  "846,141 850,155 848,165 855,185 862,210", "862,210 875,210 882,206 905,180 914,182",
  "855,175 880,180 900,182", "842,243 870,235 890,235 910,241",
  "790,240 800,260 780,270 750,276 735,290 715,296 713,315 722,325",
  "700,300 720,296 748,290 757,280 767,265", "722,325 740,330 760,325 775,305 790,285 810,292 840,300",
  "690,320 695,340 720,350 745,357 768,355", "800,330 820,345 850,352 862,345", "733,416 739,400 760,395",
  "695,270 714,270 730,265 740,273", "702,300 690,310 680,335", "760,275 765,290 785,297 790,320",
  "640,350 645,330 660,325", "596,410 620,415 630,440", "568,480 590,478 612,485 625,470",
  "540,606 550,604 558,608", "528,575 533,580 531,590 536,596 530,600 540,606",
  "660,150 676,160 690,158", "670,180 676,200 672,215 690,220", "630,300 645,305 660,300 668,310",
  "668,310 672,330 662,350", "600,443 590,460 606,478 625,470", "545,448 560,440 575,455 590,460",
  "642,400 657,405", "700,340 722,325", "582,320 596,305 612,300 625,296", "680,240 690,250 700,255",
  "500,355 512,345 530,346 545,332", "470,384 500,380"
];
borders.forEach(s => {
  const pts = s.split(" ").map(p => p.split(",").map(Number));
  const out = [pts[0]];
  for (let i = 1; i < pts.length; i++) rough(pts[i - 1], pts[i], out);
  add("polyline", {
    points: out.map(p => p[0].toFixed(1) + "," + p[1].toFixed(1)).join(" "),
    fill: "none", stroke: "#b0b0b0", "stroke-width": 0.7
  });
});

// x, y, angle of the ID_2 slice in degrees
const mixed = [
  [573,157,18],[610,202,4],[610,234,3],[578,221,20],[675,228,4],[681,261,5],[688,292,5],[676,325,5],[713,247,4],
  [752,263,4],[720,279,3],[778,296,4],[745,311,4],[889,226,20],[921,235,2],[816,279,6],[848,279,6],[842,311,5],
  [873,311,8],[906,300,6],[909,332,8],[812,343,9],[845,343,9],[516,281,14],[548,288,5],[476,335,1],[559,320,1],
  [591,335,0],[559,352,1],[623,351,0],[549,384,1],[581,384,1],[517,399,0],[642,383,5],[674,383,4],[706,369,5],
  [739,399,4],[560,416,1],[592,428,1],[493,431,0],[426,465,1],[641,445,5],[608,460,3],[688,430,2],[501,478,0],
  [548,471,24],[536,503,10],[640,477,107],[673,493,20],[704,495,20],[594,506,107],[634,509,107],[666,526,20],
  [602,539,78],[634,547,78],[668,558,9],[636,579,78],[617,611,78],[546,546,10],[504,538,0],[456,526,0],
  [450,558,0],[450,590,0],[482,570,107],[515,570,107],[549,587,10],[549,619,10],[585,581,10],[581,613,10],[581,645,10]
];
mixed.forEach(([x, y, deg]) => {
  add("circle", { cx: x, cy: y, r: R, fill: "#a0ff6e" });
  if (!deg) return;
  const t = deg * Math.PI / 180;
  add("path", {
    d: `M${x} ${y}h${R}A${R} ${R} 0 0 0 ${x + R * Math.cos(t)} ${y - R * Math.sin(t)}z`,
    fill: deg < 12 ? "#59395a" : "#87288c"
  });
});

const leaders = [
  [587,157,597,163],[555,176,685,240],[587,189,728,206],[555,208,683,208],[523,217,690,228],[592,221,719,220],
  [618,170,704,226],[618,175,700,240],[651,170,735,238],[683,170,679,222],[656,202,668,240],[656,205,710,245],
  [659,228,658,291],[624,202,675,247],[624,234,670,268],[528,249,638,294],[560,249,665,249],[592,256,642,303],
  [641,264,660,259],[530,281,653,277],[562,288,568,288],[594,282,613,272],[594,288,600,293],[617,311,632,325],
  [690,272,684,285],[573,320,580,330],[592,350,614,387],[490,334,508,348],[514,343,509,350],[683,227,692,228],
  [765,155,764,172],[720,191,731,222],[758,212,770,252],[855,159,760,223],[887,159,745,208],[812,191,811,220],
  [891,195,772,239],[924,203,775,240],[757,225,875,226],[720,235,835,224],[907,235,741,248],[866,258,798,258],
  [898,267,765,266],[924,299,797,258],[892,300,792,300],[754,296,765,298],[779,274,810,297],[801,280,794,296],
  [812,292,784,310],[785,310,798,341],[780,325,795,312],[834,279,830,282],[752,281,764,295],[760,312,829,342],
  [762,327,800,358],[824,311,862,342],[824,311,894,332],[822,303,858,311],[796,340,833,361],[721,353,759,365],
  [757,343,743,431],[703,372,757,374],[734,366,757,406],[747,374,770,393],[785,375,805,393],[793,352,822,374],
  [676,349,692,369],[716,386,707,425],[680,389,694,462],[692,398,697,460],[635,418,623,460],[584,401,574,416],
  [543,416,541,430],[576,448,625,473],[602,449,690,495],[613,448,686,527],[576,463,622,501],[597,478,620,509],
  [615,466,626,477],[649,490,657,494],[644,520,652,526],[569,539,588,543],[603,554,620,547],[612,549,620,550],
  [645,557,654,558],[612,563,603,611],[572,557,567,645],[583,553,564,618],[475,431,558,448],[483,463,558,437],
  [499,367,514,377],[531,366,537,371],[517,510,507,525],[558,500,497,570],[566,521,529,570],[492,547,486,557],
  [482,544,464,558],[471,579,464,590],[467,623,476,614],[517,573,497,593],[515,572,499,603],[518,577,499,635],
  [521,576,531,630],[528,570,532,603]
];
leaders.forEach(([x1, y1, x2, y2]) => add("line", { x1, y1, x2, y2, stroke: "#6d2a70", "stroke-width": 1 }));

const solid = [
  [541,176],[573,189],[605,170],[637,170],[669,170],[704,159],[701,196],[751,157],[783,156],[745,189],[787,188],
  [837,187],[869,159],[901,159],[874,191],[906,193],[938,202],[541,208],[509,217],[642,202],[642,234],[745,221],
  [793,220],[825,218],[857,225],[784,252],[514,249],[546,249],[578,256],[627,266],[580,288],[612,298],[644,316],
  [880,258],[912,266],[938,298],[810,310],[508,329],[517,361],[485,367],[485,399],[713,337],[746,343],[780,343],
  [876,343],[771,375],[803,375],[835,375],[867,375],[771,407],[803,407],[835,407],[720,431],[757,439],[680,462],
  [712,463],[376,427],[461,431],[527,431],[469,463],[412,510],[372,533],[351,565],[453,622],[485,603],[517,603],
  [485,635],[517,635],[700,527]
];
solid.forEach(([cx, cy]) => add("circle", { cx, cy, r: R, fill: "#87288c" }));
add("line", { x1: 499, y1: 399, x2: 537, y2: 445, stroke: "#592a60", "stroke-width": 1 });
[[785,375],[817,375],[849,375],[785,407],[817,407]].forEach(([x, y]) =>
  add("line", { x1: x, y1: y - 3, x2: x + 5, y2: y, stroke: "#59395a", "stroke-width": 1 }));
```
